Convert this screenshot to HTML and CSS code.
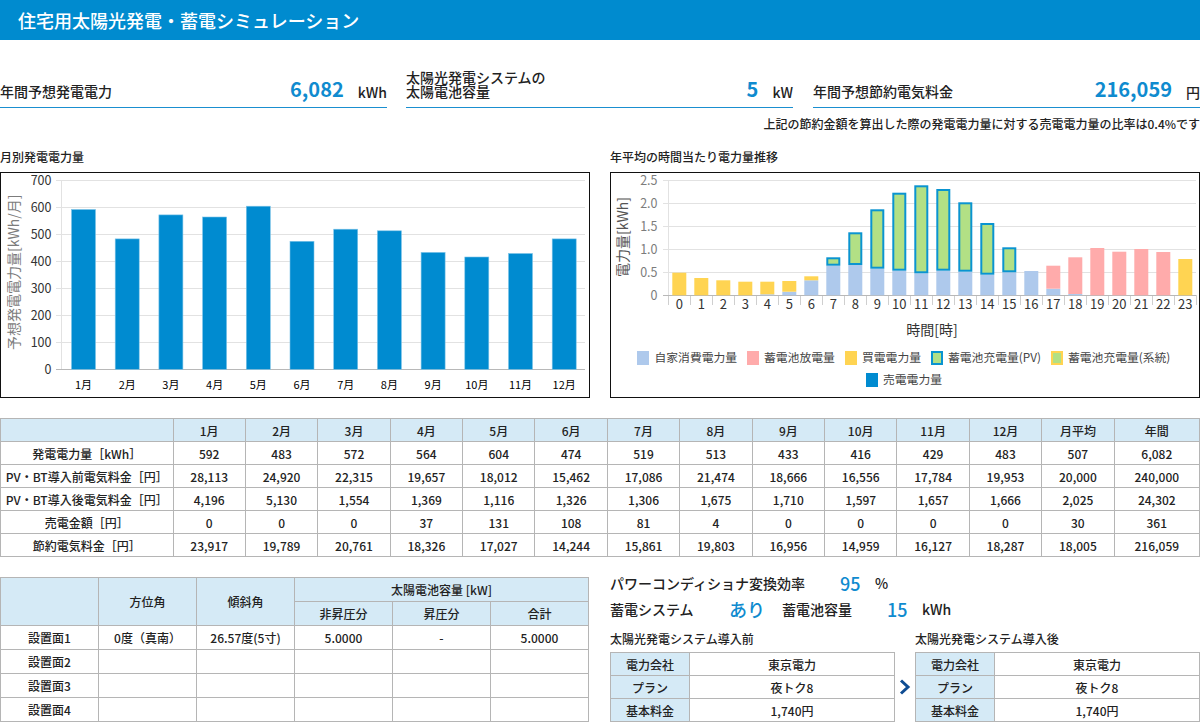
FILE: index.html
```html
<!DOCTYPE html>
<html lang="ja">
<head>
<meta charset="utf-8">
<title>住宅用太陽光発電・蓄電シミュレーション</title>
<link rel="stylesheet" href="styles.css">
</head>
<body>
<header class="page-head">住宅用太陽光発電・蓄電シミュレーション</header>

<section class="summary">
  <div class="stat"><span class="stat-label">年間予想発電電力</span><span class="stat-value">6,082</span><span class="stat-unit">kWh</span></div>
  <div class="stat"><span class="stat-label">太陽光発電システムの<br>太陽電池容量</span><span class="stat-value">5</span><span class="stat-unit">kW</span></div>
  <div class="stat"><span class="stat-label">年間予想節約電気料金</span><span class="stat-value">216,059</span><span class="stat-unit">円</span></div>
</section>
<p class="note">上記の節約金額を算出した際の発電電力量に対する売電電力量の比率は0.4%です</p>

<section class="charts">
  <div class="chart-col">
    <h2 class="chart-title">月別発電電力量</h2>
    <div class="chart-box">
      <svg class="chart" viewBox="1 173 588 224">
        <g class="grid">
          <path d="M56 180.5H585M56 207.5H585M56 234.5H585M56 261.5H585M56 288.5H585M56 315.5H585M56 342.5H585M61.5 180V369"/>
        </g>
        <path class="axis" d="M56 369.5H585"/>
        <g class="blue">
          <rect x="71.5" y="209.5" width="24" height="159.8"/>
          <rect x="115.2" y="238.9" width="24" height="130.4"/>
          <rect x="158.9" y="214.9" width="24" height="154.4"/>
          <rect x="202.6" y="217" width="24" height="152.3"/>
          <rect x="246.3" y="206.2" width="24" height="163.1"/>
          <rect x="290" y="241.3" width="24" height="128"/>
          <rect x="333.7" y="229.2" width="24" height="140.1"/>
          <rect x="377.4" y="230.8" width="24" height="138.5"/>
          <rect x="421.1" y="252.4" width="24" height="116.9"/>
          <rect x="464.8" y="257" width="24" height="112.3"/>
          <rect x="508.5" y="253.5" width="24" height="115.8"/>
          <rect x="552.2" y="238.9" width="24" height="130.4"/>
        </g>
        <g class="ylabels dark">
          <text x="51.5" y="185">700</text><text x="51.5" y="212">600</text><text x="51.5" y="239">500</text><text x="51.5" y="266">400</text><text x="51.5" y="293">300</text><text x="51.5" y="320">200</text><text x="51.5" y="347">100</text><text x="51.5" y="374">0</text>
        </g>
        <g class="xlabels small">
          <text x="83.5" y="389">1月</text><text x="127.2" y="389">2月</text><text x="170.9" y="389">3月</text><text x="214.6" y="389">4月</text><text x="258.3" y="389">5月</text><text x="302" y="389">6月</text><text x="345.7" y="389">7月</text><text x="389.4" y="389">8月</text><text x="433.1" y="389">9月</text><text x="476.8" y="389">10月</text><text x="520.5" y="389">11月</text><text x="564.2" y="389">12月</text>
        </g>
        <text class="ytitle grey" transform="translate(19 350) rotate(-90)">予想発電電力量[kWh/月]</text>
      </svg>
    </div>
  </div>
  <div class="chart-col">
    <h2 class="chart-title">年平均の時間当たり電力量推移</h2>
    <div class="chart-box">
      <svg class="chart" viewBox="611 173 588 224">
        <path class="grid-line" d="M663 180.5H1196M663 203.5H1196M663 226.5H1196M663 249.5H1196M663 272.5H1196M668.5 180V295"/>
        <path class="tick" d="M668.5 295V305M690.5 295V305M712.5 295V305M734.5 295V305M756.5 295V305M778.5 295V305M800.5 295V305M822.5 295V305M844.5 295V305M866.5 295V305M888.5 295V305M910.5 295V305M932.5 295V305M954.5 295V305M976.5 295V305M998.5 295V305M1020.5 295V305M1042.5 295V305M1064.5 295V305M1086.5 295V305M1108.5 295V305M1130.5 295V305M1152.5 295V305M1174.5 295V305M1196.5 295V305"/>
        <path class="axis" d="M663 295.5H1196"/>
        <g class="self">
          <rect x="760.3" y="294.3" width="14" height="1"/>
          <rect x="782.3" y="291.7" width="14" height="3.6"/>
          <rect x="804.3" y="280.3" width="14" height="15"/>
          <rect x="826.3" y="265.7" width="14" height="29.6"/>
          <rect x="848.3" y="265" width="14" height="30.3"/>
          <rect x="870.3" y="268.7" width="14" height="26.6"/>
          <rect x="892.3" y="270.7" width="14" height="24.6"/>
          <rect x="914.3" y="273.3" width="14" height="22"/>
          <rect x="936.3" y="270.7" width="14" height="24.6"/>
          <rect x="958.3" y="271.7" width="14" height="23.6"/>
          <rect x="980.3" y="274.7" width="14" height="20.6"/>
          <rect x="1002.3" y="272.3" width="14" height="23"/>
          <rect x="1024.3" y="271" width="14" height="24.3"/>
          <rect x="1046.3" y="288.7" width="14" height="6.6"/>
          <rect x="1068.3" y="294" width="14" height="1.3"/>
        </g>
        <g class="buy">
          <rect x="672.3" y="272.7" width="14" height="22.6"/>
          <rect x="694.3" y="278" width="14" height="17.3"/>
          <rect x="716.3" y="280.3" width="14" height="15"/>
          <rect x="738.3" y="281.7" width="14" height="13.6"/>
          <rect x="760.3" y="281.7" width="14" height="12.6"/>
          <rect x="782.3" y="281" width="14" height="10.7"/>
          <rect x="804.3" y="276.3" width="14" height="4"/>
          <rect x="1178.3" y="259" width="14" height="36.3"/>
        </g>
        <g class="pink">
          <rect x="1046.3" y="265.7" width="14" height="23"/>
          <rect x="1068.3" y="257.3" width="14" height="36.7"/>
          <rect x="1090.3" y="248" width="14" height="47.3"/>
          <rect x="1112.3" y="251.7" width="14" height="43.6"/>
          <rect x="1134.3" y="249" width="14" height="46.3"/>
          <rect x="1156.3" y="252" width="14" height="43.3"/>
        </g>
        <g class="pv">
          <rect x="827.3" y="258.3" width="12" height="6.4"/>
          <rect x="849.3" y="233.3" width="12" height="30.7"/>
          <rect x="871.3" y="210.3" width="12" height="57.4"/>
          <rect x="893.3" y="193.7" width="12" height="76"/>
          <rect x="915.3" y="186.3" width="12" height="86"/>
          <rect x="937.3" y="190" width="12" height="79.7"/>
          <rect x="959.3" y="203.3" width="12" height="67.4"/>
          <rect x="981.3" y="224" width="12" height="49.7"/>
          <rect x="1003.3" y="248.3" width="12" height="23"/>
        </g>
        <g class="ylabels grey">
          <text x="657.5" y="185">2.5</text><text x="657.5" y="208">2.0</text><text x="657.5" y="231">1.5</text><text x="657.5" y="254">1.0</text><text x="657.5" y="277">0.5</text><text x="657.5" y="300">0</text>
        </g>
        <g class="xlabels dark">
          <text x="679.3" y="309">0</text><text x="701.3" y="309">1</text><text x="723.3" y="309">2</text><text x="745.3" y="309">3</text><text x="767.3" y="309">4</text><text x="789.3" y="309">5</text><text x="811.3" y="309">6</text><text x="833.3" y="309">7</text><text x="855.3" y="309">8</text><text x="877.3" y="309">9</text><text x="899.3" y="309">10</text><text x="921.3" y="309">11</text><text x="943.3" y="309">12</text><text x="965.3" y="309">13</text><text x="987.3" y="309">14</text><text x="1009.3" y="309">15</text><text x="1031.3" y="309">16</text><text x="1053.3" y="309">17</text><text x="1075.3" y="309">18</text><text x="1097.3" y="309">19</text><text x="1119.3" y="309">20</text><text x="1141.3" y="309">21</text><text x="1163.3" y="309">22</text><text x="1185.3" y="309">23</text>
        </g>
        <text class="xtitle dark" x="932" y="335">時間[時]</text>
        <text class="ytitle mid" transform="translate(628 277) rotate(-90)">電力量[kWh]</text>
        <g class="legend">
          <rect class="swatch-self" x="637" y="351" width="12" height="14"/><text x="654.5" y="362">自家消費電力量</text>
          <rect class="swatch-pink" x="747" y="351" width="12" height="14"/><text x="764" y="362">蓄電池放電量</text>
          <rect class="swatch-buy" x="845" y="351" width="12" height="14"/><text x="862" y="362">買電電力量</text>
          <rect class="swatch-pv" x="932" y="352" width="10" height="12"/><text x="948" y="362">蓄電池充電量(PV)</text>
          <rect class="swatch-grid" x="1052" y="352" width="10" height="12"/><text x="1068" y="362">蓄電池充電量(系統)</text>
          <rect class="swatch-sell" x="866" y="373" width="12" height="14"/><text x="883" y="384">売電電力量</text>
        </g>
      </svg>
    </div>
  </div>
</section>

<table class="grid-table monthly">
  <colgroup><col class="c-head"><col class="c-m"><col class="c-m"><col class="c-m"><col class="c-m"><col class="c-m"><col class="c-m"><col class="c-m"><col class="c-m"><col class="c-m"><col class="c-m"><col class="c-m"><col class="c-m"><col class="c-m"><col></colgroup>
  <tr><th></th><th>1月</th><th>2月</th><th>3月</th><th>4月</th><th>5月</th><th>6月</th><th>7月</th><th>8月</th><th>9月</th><th>10月</th><th>11月</th><th>12月</th><th>月平均</th><th>年間</th></tr>
  <tr><td>発電電力量［kWh］</td><td>592</td><td>483</td><td>572</td><td>564</td><td>604</td><td>474</td><td>519</td><td>513</td><td>433</td><td>416</td><td>429</td><td>483</td><td>507</td><td>6,082</td></tr>
  <tr><td>PV・BT導入前電気料金［円］</td><td>28,113</td><td>24,920</td><td>22,315</td><td>19,657</td><td>18,012</td><td>15,462</td><td>17,086</td><td>21,474</td><td>18,666</td><td>16,556</td><td>17,784</td><td>19,953</td><td>20,000</td><td>240,000</td></tr>
  <tr><td>PV・BT導入後電気料金［円］</td><td>4,196</td><td>5,130</td><td>1,554</td><td>1,369</td><td>1,116</td><td>1,326</td><td>1,306</td><td>1,675</td><td>1,710</td><td>1,597</td><td>1,657</td><td>1,666</td><td>2,025</td><td>24,302</td></tr>
  <tr><td>売電金額［円］</td><td>0</td><td>0</td><td>0</td><td>37</td><td>131</td><td>108</td><td>81</td><td>4</td><td>0</td><td>0</td><td>0</td><td>0</td><td>30</td><td>361</td></tr>
  <tr><td>節約電気料金［円］</td><td>23,917</td><td>19,789</td><td>20,761</td><td>18,326</td><td>17,027</td><td>14,244</td><td>15,861</td><td>19,803</td><td>16,956</td><td>14,959</td><td>16,127</td><td>18,287</td><td>18,005</td><td>216,059</td></tr>
</table>

<section class="bottom">
  <table class="grid-table panels">
    <tr><th rowspan="2"></th><th rowspan="2">方位角</th><th rowspan="2">傾斜角</th><th colspan="3">太陽電池容量 [kW]</th></tr>
    <tr><th>非昇圧分</th><th>昇圧分</th><th>合計</th></tr>
    <tr><td>設置面1</td><td>0度（真南）</td><td>26.57度(5寸)</td><td>5.0000</td><td>-</td><td>5.0000</td></tr>
    <tr><td>設置面2</td><td></td><td></td><td></td><td></td><td></td></tr>
    <tr><td>設置面3</td><td></td><td></td><td></td><td></td><td></td></tr>
    <tr><td>設置面4</td><td></td><td></td><td></td><td></td><td></td></tr>
  </table>
  <div class="side">
    <div class="spec spec-first">
      <span class="spec-label w-pcs">パワーコンディショナ変換効率</span><span class="spec-value w-95">95</span><span class="spec-unit">%</span>
    </div>
    <div class="spec">
      <span class="spec-label w-sys">蓄電システム</span><span class="spec-value w-ari">あり</span><span class="spec-label w-cap">蓄電池容量</span><span class="spec-value w-15">15</span><span class="spec-unit">kWh</span>
    </div>
    <div class="plans">
      <div class="plan">
        <h3 class="plan-title">太陽光発電システム導入前</h3>
        <table class="grid-table plan-table">
          <tr><th>電力会社</th><td>東京電力</td></tr>
          <tr><th>プラン</th><td>夜トク8</td></tr>
          <tr><th>基本料金</th><td>1,740円</td></tr>
        </table>
      </div>
      <svg class="chevron" viewBox="0 0 12 16"><path d="M2 1.5 9 8l-7 6.5"/></svg>
      <div class="plan">
        <h3 class="plan-title">太陽光発電システム導入後</h3>
        <table class="grid-table plan-table">
          <tr><th>電力会社</th><td>東京電力</td></tr>
          <tr><th>プラン</th><td>夜トク8</td></tr>
          <tr><th>基本料金</th><td>1,740円</td></tr>
        </table>
      </div>
    </div>
  </div>
</section>
</body>
</html>
```

FILE: styles.css
```css
* { box-sizing: border-box; }
html, body { margin: 0; padding: 0; }
body {
  width: 1200px;
  height: 722px;
  overflow: hidden;
  background: #fff;
  color: #222;
  font-family: "Noto Sans CJK JP", "Noto Sans", sans-serif;
  font-size: 12px;
}
.page-head {
  height: 40px;
  line-height: 40px;
  padding-left: 18px;
  background: #008bcf;
  color: #fff;
  font-size: 18px;
  font-weight: 500;
}
.summary { display: flex; gap: 19px; margin-top: 30px; width: 1200px; }
.stat {
  flex: 0 0 387px;
  height: 38px;
  display: flex;
  align-items: flex-end;
  border-bottom: 1px solid #1a8fd0;
  padding-bottom: 6px;
}
.stat + .stat + .stat { margin-left: 1px; }
.stat-label { flex: 1; margin-bottom: 3px; font-size: 14px; line-height: 14px; font-weight: 500; }
.stat-value { font-size: 20px; line-height: 24px; font-weight: 700; color: #0f8bcf; }
.stat-unit { margin-left: 14px; font-size: 14px; line-height: 18px; font-weight: 500; }
.note { margin: 7px 0 0; height: 18px; line-height: 18px; text-align: right; font-weight: 500; }
.charts { display: flex; gap: 19px; margin-top: 15px; }
.chart-col { flex: 0 0 590px; }
.chart-col + .chart-col { flex-basis: 590px; margin-left: 1px; }
.chart-title { margin: 0 0 6px; font-size: 12px; line-height: 18px; font-weight: 500; }
.chart-box { height: 226px; border: 1px solid #111; }
.chart { display: block; width: 100%; height: 100%; overflow: visible; }
.grid path, .grid-line { fill: none; stroke: #e2e2e2; stroke-width: 1; }
.axis { fill: none; stroke: #b8b8b8; stroke-width: 1; }
.tick { fill: none; stroke: #cfcfcf; stroke-width: 1; }
.blue rect { fill: #008bd0; stroke: #7cc3e8; stroke-width: .6; }
.self rect { fill: #aec9ec; }
.buy rect { fill: #ffd452; }
.pink rect { fill: #ffabab; }
.pv rect { fill: #b2e085; stroke: #0a94d0; stroke-width: 2; }
.chart text { font-family: "Noto Sans CJK JP", "Noto Sans", sans-serif; }
.ylabels text { font-size: 12.5px; text-anchor: end; }
.xlabels text { font-size: 13px; text-anchor: middle; }
.xlabels.small text { font-size: 11px; }
.dark text, .dark { fill: #333; }
.grey text, .grey { fill: #7c7c7c; }
.mid { fill: #555; }
.ytitle { font-size: 14px; }
.xtitle { font-size: 14px; text-anchor: middle; }
.legend text { font-size: 11.8px; fill: #444; }
.swatch-self { fill: #aec9ec; }
.swatch-pink { fill: #ffabab; }
.swatch-buy { fill: #ffd452; }
.swatch-pv { fill: #b2e085; stroke: #0a94d0; stroke-width: 2; }
.swatch-grid { fill: #b2e085; stroke: #ffd452; stroke-width: 2; }
.swatch-sell { fill: #008bd0; }
.grid-table { border-collapse: collapse; table-layout: fixed; font-size: 12px; }
.grid-table th, .grid-table td {
  border: 1px solid #b5b5b5;
  padding: 0;
  text-align: center;
  font-weight: 500;
  white-space: nowrap;
}
.grid-table th { background: #d5eaf6; }
.monthly { width: 1200px; margin-top: 20px; }
.monthly tr { height: 23px; }
.c-head { width: 172.5px; }
.c-m { width: 72.4px; }
.bottom { display: flex; margin-top: 20px; }
.panels { flex: 0 0 589px; width: 589px; margin-right: 21px; }
.panels tr { height: 24px; }
.side { flex: 1; }
.spec { display: flex; align-items: center; height: 26px; font-size: 14px; font-weight: 500; }
.spec-first { margin-top: -7px; }
.spec-value { color: #0f8bcf; font-size: 18px; font-weight: 500; }
.spec-unit { font-weight: 500; }
.w-pcs { width: 230px; }
.w-95 { width: 35px; }
.w-sys { width: 119px; }
.w-ari { width: 53px; }
.w-cap { width: 105px; }
.w-15 { width: 35px; }
.plans { display: flex; align-items: flex-end; margin-top: 8px; }
.plan { flex: 0 0 285px; }
.plan-title { margin: 0 0 4px; height: 18px; font-size: 12px; line-height: 18px; font-weight: 500; }
.plan-table { width: 285px; }
.plan-table tr { height: 23px; }
.plan-table th { width: 79px; }
.chevron { flex: 0 0 12px; width: 12px; height: 16px; margin: 0 4px 27px 4px; }
.chevron path { fill: none; stroke: #0e4c92; stroke-width: 3; }
```
